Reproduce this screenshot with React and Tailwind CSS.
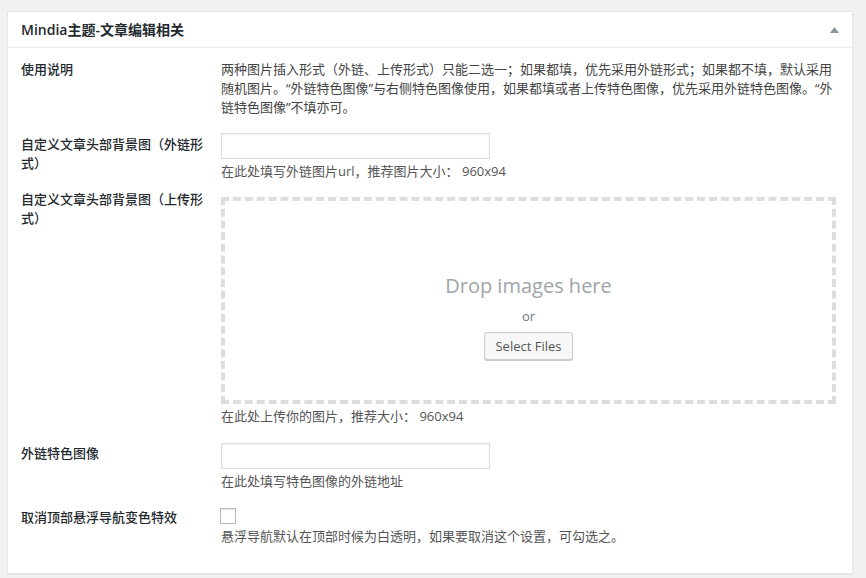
const font = { fontFamily: '"Open Sans", "Noto Sans CJK SC", sans-serif' };

const Label = ({ children, className = '' }) => (
  <div className={`w-[200px] shrink-0 pr-[14px] text-[13px] leading-[19px] font-medium text-[#23282d] ${className}`}>
    {children}
  </div>
);

const Help = ({ children }) => (
  <p className="mt-[3px] text-[13px] leading-[19px] text-[#555]">{children}</p>
);

const TextInput = () => (
  <input
    type="text"
    className="block w-[269px] h-[26px] border border-[#ddd] bg-white shadow-[inset_0_1px_2px_rgba(0,0,0,0.07)] outline-none"
  />
);

export default function App() {
  return (
    <div className="min-h-screen bg-[#f1f1f1] pl-[7px] pt-[11px]" style={font}>
      <div className="w-[846px] bg-white border border-[#e5e5e5] shadow-[0_1px_1px_rgba(0,0,0,0.04)]">
        <div className="h-[36px] flex items-center justify-between pl-[13px] pr-[13px] border-b border-[#eee]">
          <h2 className="text-[14px] leading-[19px] font-semibold text-[#23282d]">Mindia主题-文章编辑相关</h2>
          <svg width="9" height="6" viewBox="0 0 9 6" className="mt-[1px]">
            <polygon points="4.5,0 9,6 0,6" fill="#8f9599" />
          </svg>
        </div>

        <div className="pl-[13px] pr-[16px] pb-[27px]">
          <div className="flex mt-[12px]">
            <Label>使用说明</Label>
            <p className="flex-1 text-[13px] leading-[19px] text-[#444]">
              两种图片插入形式（外链、上传形式）只能二选一；如果都填，优先采用外链形式；如果都不填，默认采用随机图片。“外链特色图像”与右侧特色图像使用，如果都填或者上传特色图像，优先采用外链特色图像。“外链特色图像”不填亦可。
            </p>
          </div>

          <div className="flex mt-[16px]">
            <Label className="pt-[2px]">自定义文章头部背景图（外链形式）</Label>
            <div className="flex-1">
              <TextInput />
              <Help>在此处填写外链图片url，推荐图片大小： 960x94</Help>
            </div>
          </div>

          <div className="flex mt-[9px]">
            <Label>自定义文章头部背景图（上传形式）</Label>
            <div className="flex-1">
              <div className="mt-[7px] h-[207px] border-4 border-dashed border-[#ddd] flex flex-col items-center pt-[71px]">
                <p className="text-[20px] leading-[28px] text-[#a0a5aa]">Drop images here</p>
                <p className="mt-[7px] text-[13px] leading-[19px] text-[#72777c]">or</p>
                <button className="mt-[6px] h-[28px] px-[10px] rounded-[3px] border border-[#ccc] bg-[#f7f7f7] shadow-[0_1px_0_#ccc] text-[13px] leading-[26px] text-[#555]">
                  Select Files
                </button>
              </div>
              <Help>在此处上传你的图片，推荐大小： 960x94</Help>
            </div>
          </div>

          <div className="flex mt-[17px]">
            <Label className="pt-[1px]">外链特色图像</Label>
            <div className="flex-1">
              <TextInput />
              <Help>在此处填写特色图像的外链地址</Help>
            </div>
          </div>

          <div className="flex mt-[17px]">
            <Label>取消顶部悬浮导航变色特效</Label>
            <div className="flex-1">
              <div className="w-[16px] h-[16px] -ml-[1px] border border-[#b4b9be] bg-white shadow-[inset_0_1px_2px_rgba(0,0,0,0.1)]" />
              <Help>悬浮导航默认在顶部时候为白透明，如果要取消这个设置，可勾选之。</Help>
            </div>
          </div>
        </div>
      </div>
    </div>
  );
}
